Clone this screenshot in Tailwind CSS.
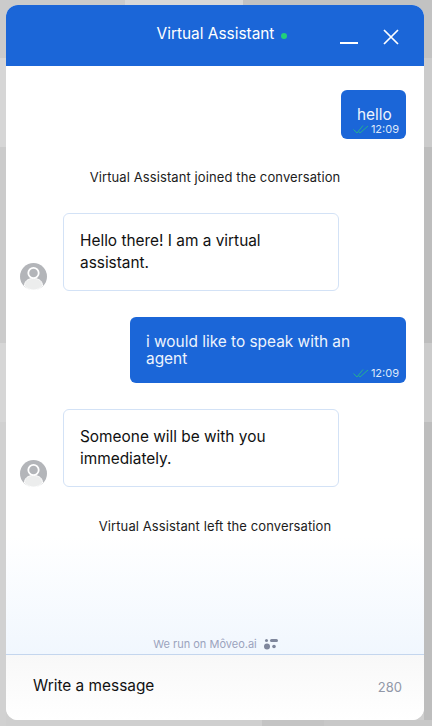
<!DOCTYPE html>
<html lang="en">
<head>
  <meta charset="UTF-8">
  <meta name="viewport" content="width=device-width, initial-scale=1.0">
  <title>Virtual Assistant</title>
  <script src="https://cdn.jsdelivr.net/npm/@tailwindcss/browser@4"></script>
</head>
<body class="h-[726px] w-[432px] overflow-hidden bg-[#cfcfcf] font-['Inter',sans-serif]">
  <div class="relative h-full w-full pt-[5px] pl-[6px]">
    <!-- blurred page behind the widget -->
    <div class="absolute left-0 top-0 h-[58px] w-[125px] bg-[#cbcbcb]"></div>
    <div class="absolute left-[125px] top-0 h-[5px] w-[118px] bg-[#d8d8d8]"></div>
    <div class="absolute left-[243px] top-0 h-[58px] w-[189px] bg-[#c2c2c2]"></div>
    <div class="absolute left-0 top-[58px] h-[89px] w-[6px] bg-[#d6d6d6]"></div>
    <div class="absolute left-0 top-[147px] h-[196px] w-[6px] bg-[#cbcbcb]"></div>
    <div class="absolute left-0 top-[343px] h-[79px] w-[6px] bg-[#d6d6d6]"></div>
    <div class="absolute left-0 top-[422px] h-[304px] w-[6px] bg-[#d1d1d1]"></div>
    <div class="absolute left-[424px] top-[58px] h-[89px] w-[8px] bg-[#cbcbcb]"></div>
    <div class="absolute left-[424px] top-[147px] h-[196px] w-[8px] bg-[#bdbdbd]"></div>
    <div class="absolute left-[424px] top-[343px] h-[79px] w-[8px] bg-[#cbcbcb]"></div>
    <div class="absolute left-[424px] top-[422px] h-[304px] w-[8px] bg-[#bdbdbd]"></div>
    <div class="absolute left-[262px] bottom-0 h-[6px] w-[62px] bg-[#c4c4c4]"></div>
    <div class="absolute left-[324px] bottom-0 h-[6px] w-[108px] bg-[#c8c8c8]"></div>

    <!-- Widget -->
    <div class="relative flex h-[715px] w-[418px] flex-col overflow-hidden rounded-[12px] bg-white">
      <!-- Header -->
      <header class="relative flex h-[61px] shrink-0 items-center justify-center bg-[#1b66d8] pl-[14px] pb-[3px] text-white">
        <span class="text-[15.4px] leading-[20px]">Virtual Assistant</span>
        <span class="ml-[7px] mt-[3px] h-[6px] w-[6px] rounded-full bg-[#22cf7a]"></span>
        <svg class="absolute left-[334px] top-[36px]" width="18" height="4" viewBox="0 0 18 4"><path d="M0 2h18" stroke="#fff" stroke-width="2"/></svg>
        <svg class="absolute left-[377px] top-[24px]" width="16" height="16" viewBox="0 0 16 16" fill="none"><path d="M1 1l14 14M15 1L1 15" stroke="#fff" stroke-width="1.7"/></svg>
      </header>

      <!-- Messages -->
      <main class="flex flex-1 flex-col bg-gradient-to-b from-white from-80% to-[#f1f7fe] pt-[24px] pr-[18px]">
        <div class="flex justify-end">
          <div class="relative h-[49px] w-[65px] rounded-[6px] bg-[#1b66d8] pt-[17px] pl-[16px] text-[15.4px] leading-[16px] text-[#eef4fd]">
            hello
            <span class="absolute bottom-[4px] right-[7px] flex items-center text-[11px] leading-[12px] text-[#dde8fa]">
              <svg class="mr-[2px]" width="16" height="9" viewBox="0 0 16 9" fill="none"><path d="M0.5 4.5l3.5 3.5 6-7.500M5.5 6.500l1.500 1.500 8-7" stroke="#27c07d" stroke-width="0.8"/></svg>12:09
            </span>
          </div>
        </div>

        <p class="mt-[29px] pl-[18px] text-center text-[13px] leading-[18px] tracking-[0.1px] text-[#1c1c1c]">Virtual Assistant joined the conversation</p>

        <div class="mt-[27px] flex items-end pl-[14px]">
          <svg class="mb-[1px] shrink-0" width="27" height="27" viewBox="0 0 27 27">
            <circle cx="13.500" cy="13.500" r="13.500" fill="#b3b5b9"/>
            <circle cx="13.500" cy="10" r="5.200" fill="none" stroke="#fff" stroke-width="1.800"/>
            <path d="M4.500 23c0-5 3.500-7.500 9-7.500s9 2.500 9 7.500c-2.500 2.500-5.500 4-9 4s-6.500-1.500-9-4z" fill="#eceded" stroke="#fff"/>
          </svg>
          <div class="ml-[16px] h-[78px] w-[276px] rounded-[6px] border border-[#d3e2f6] bg-white pt-[16px] pl-[16px] pr-[16px] text-[15.4px] leading-[22px] text-[#111]">Hello there! I am a virtual assistant.</div>
        </div>

        <div class="mt-[26px] flex justify-end">
          <div class="relative h-[66px] w-[276px] rounded-[6px] bg-[#1b66d8] pt-[16px] pl-[16px] pr-[16px] text-[15.4px] leading-[17px] text-[#eef4fd]">
            i would like to speak with an agent
            <span class="absolute bottom-[3px] right-[7px] flex items-center text-[11px] leading-[14px] text-[#dde8fa]">
              <svg class="mr-[2px]" width="16" height="9" viewBox="0 0 16 9" fill="none"><path d="M0.5 4.5l3.5 3.5 6-7.500M5.5 6.500l1.500 1.500 8-7" stroke="#27c07d" stroke-width="0.8"/></svg>12:09
            </span>
          </div>
        </div>

        <div class="mt-[26px] flex items-end pl-[14px]">
          <svg class="shrink-0" width="27" height="27" viewBox="0 0 27 27">
            <circle cx="13.500" cy="13.500" r="13.500" fill="#b3b5b9"/>
            <circle cx="13.500" cy="10" r="5.200" fill="none" stroke="#fff" stroke-width="1.800"/>
            <path d="M4.500 23c0-5 3.500-7.500 9-7.500s9 2.500 9 7.500c-2.500 2.500-5.500 4-9 4s-6.500-1.500-9-4z" fill="#eceded" stroke="#fff"/>
          </svg>
          <div class="ml-[16px] h-[78px] w-[276px] rounded-[6px] border border-[#d3e2f6] bg-white pt-[16px] pl-[16px] pr-[16px] text-[15.4px] leading-[22px] text-[#111]">Someone will be with you immediately.</div>
        </div>

        <p class="mt-[30px] pl-[18px] text-center text-[13px] leading-[18px] tracking-[0.1px] text-[#1c1c1c]">Virtual Assistant left the conversation</p>

        <div class="mt-auto flex h-[20px] items-center justify-center pl-[19px] text-[11px] text-[#9ba3bd]">
          <span>We run on Môveo.ai</span>
          <svg class="ml-[7px]" width="14" height="12" viewBox="0 0 14 12" fill="#7f879c"><circle cx="2.500" cy="2.500" r="1.500"/><rect x="6" y="1" width="8" height="3" rx="1.500"/><circle cx="3" cy="8.500" r="3"/><circle cx="10" cy="8.500" r="1.800"/></svg>
        </div>
      </main>

      <!-- Input -->
      <footer class="flex h-[66px] shrink-0 items-center justify-between border-t border-[#c4d6ee] bg-gradient-to-b from-[#f8f8f8] to-white pb-[4px] pl-[27px] pr-[22px]">
        <span class="text-[15.4px] leading-[20px] text-[#111]">Write a message</span>
        <span class="mt-[3px] text-[13px] leading-[16px] text-[#9298a8]">280</span>
      </footer>
    </div>
  </div>
</body>
</html>
